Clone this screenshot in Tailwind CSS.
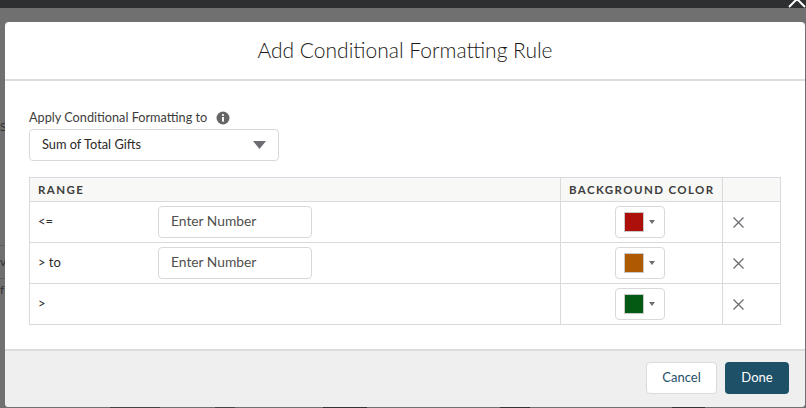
<!DOCTYPE html>
<html lang="en">
<head>
<meta charset="UTF-8" />
<title>Add Conditional Formatting Rule</title>
<script src="https://cdn.jsdelivr.net/npm/@tailwindcss/browser@4"></script>
</head>
<body class="relative h-[408px] w-[806px] overflow-hidden bg-[#707070] font-['Lato','Open_Sans',sans-serif]">
	<!-- page behind the overlay -->
	<div class="h-2 bg-[#2e2f31]"></div>
	<svg class="absolute left-[788px] top-0" width="18" height="8" viewBox="0 0 18 8" fill="none" stroke="#fff" stroke-width="2"><path d="M1 7L9 -1L17 7" /></svg>
	<div class="absolute left-0 top-[120px] text-[12px] leading-[14px] text-[#333]">Sa</div>
	<div class="absolute left-0 top-[245px] h-[34px] w-[5px] border-y border-[#606060]"></div>
	<div class="absolute left-0 top-[255px] text-[12px] leading-[14px] text-[#333]">v</div>
	<div class="absolute left-0 top-[283px] text-[12px] leading-[14px] text-[#333]">f</div>
	<div class="absolute bottom-0 left-[110px] h-px w-[50px] bg-[#444]"></div>
	<div class="absolute bottom-0 left-[215px] h-px w-[20px] bg-[#444]"></div>
	<div class="absolute bottom-0 left-[323px] h-px w-[44px] bg-[#333]"></div>
	<div class="absolute bottom-0 left-[500px] h-px w-[30px] bg-[#333]"></div>
	<div class="absolute bottom-0 left-[672px] h-px w-[33px] bg-[#333]"></div>

	<!-- modal -->
	<div class="relative ml-[5px] mt-[14px] flex h-[385px] w-[800px] flex-col overflow-hidden rounded-[4px] bg-white">
		<header class="flex h-[59px] shrink-0 items-center justify-center border-b-2 border-[#dddbda] pb-px">
			<h2 class="text-[21px] font-light leading-[26px] text-[#1c1a18]">Add Conditional Formatting Rule</h2>
		</header>

		<main class="flex-1 px-6 pt-[28px]">
			<div class="flex h-[18px] items-center gap-[9px] text-[12.7px] text-[#3e3e3c]">
				<span>Apply Conditional Formatting to</span>
				<svg class="h-[14px] w-[14px]" viewBox="0 0 14 14"><circle cx="7" cy="7" r="6.5" fill="#666" /><rect x="6" y="6" width="2" height="4.6" fill="#fff" /><circle cx="7" cy="4" r="1.1" fill="#fff" /></svg>
			</div>
			<div class="mt-[2px] flex h-8 w-[250px] items-center justify-between rounded-[4px] border border-[#d8d8d8] pl-3 pr-[12px] text-[12.8px] text-[#2b2826]">
				<span>Sum of Total Gifts</span>
				<svg width="13" height="8" viewBox="0 0 13 8"><path d="M0 0H13L6.5 8Z" fill="#6b6d70" /></svg>
			</div>

			<table class="mt-4 w-[752px] table-fixed border-collapse border border-[#d8dade] text-[13px] text-[#2b2826]">
				<thead>
					<tr class="h-6 bg-[#f8f8f7] text-left text-[11.5px] font-bold tracking-[1.4px] text-[#3e3e3c]">
						<th class="w-[531px] border border-[#d8dade] pl-2 font-bold">RANGE</th>
						<th class="w-[162px] border border-[#d8dade] pl-2 font-bold">BACKGROUND COLOR</th>
						<th class="border border-[#d8dade]"></th>
					</tr>
				</thead>
				<tbody>
					<tr class="h-[41px]">
						<td class="border border-[#d8dade] pl-2">
							<div class="flex items-center">
								<span class="w-[120px]">&lt;=</span>
								<div class="flex h-8 w-[154px] items-center rounded-[4px] border border-[#d8d8d8] pb-0.5 pl-3 text-[13.8px] text-[#514f4d]">Enter Number</div>
							</div>
						</td>
						<td class="border border-[#d8dade]">
							<div class="ml-[54px] flex h-8 w-[50px] items-center gap-[5px] rounded-[4px] border border-[#d8d8d8] pl-2">
								<span class="h-5 w-5 border border-[#c9c9c9] bg-[#ad0f0a]"></span>
								<svg width="6" height="4" viewBox="0 0 6 4"><path d="M0 0H6L3 4Z" fill="#706e6b" /></svg>
							</div>
						</td>
						<td class="border border-[#d8dade] pl-[10px]">
							<svg class="block" width="11" height="11" viewBox="0 0 11 11" fill="none" stroke="#6b6d70" stroke-width="1.3"><path d="M0.5 0.5L10.5 10.5M10.5 0.5L0.5 10.5" /></svg>
						</td>
					</tr>
					<tr class="h-[41px]">
						<td class="border border-[#d8dade] pl-2">
							<div class="flex items-center">
								<span class="w-[120px]">&gt; to</span>
								<div class="flex h-8 w-[154px] items-center rounded-[4px] border border-[#d8d8d8] pb-0.5 pl-3 text-[13.8px] text-[#514f4d]">Enter Number</div>
							</div>
						</td>
						<td class="border border-[#d8dade]">
							<div class="ml-[54px] flex h-8 w-[50px] items-center gap-[5px] rounded-[4px] border border-[#d8d8d8] pl-2">
								<span class="h-5 w-5 border border-[#c9c9c9] bg-[#ad5a00]"></span>
								<svg width="6" height="4" viewBox="0 0 6 4"><path d="M0 0H6L3 4Z" fill="#706e6b" /></svg>
							</div>
						</td>
						<td class="border border-[#d8dade] pl-[10px]">
							<svg class="block" width="11" height="11" viewBox="0 0 11 11" fill="none" stroke="#6b6d70" stroke-width="1.3"><path d="M0.5 0.5L10.5 10.5M10.5 0.5L0.5 10.5" /></svg>
						</td>
					</tr>
					<tr class="h-[41px]">
						<td class="border border-[#d8dade] pl-2">&gt;</td>
						<td class="border border-[#d8dade]">
							<div class="ml-[54px] flex h-8 w-[50px] items-center gap-[5px] rounded-[4px] border border-[#d8d8d8] pl-2">
								<span class="h-5 w-5 border border-[#c9c9c9] bg-[#045a13]"></span>
								<svg width="6" height="4" viewBox="0 0 6 4"><path d="M0 0H6L3 4Z" fill="#706e6b" /></svg>
							</div>
						</td>
						<td class="border border-[#d8dade] pl-[10px]">
							<svg class="block" width="11" height="11" viewBox="0 0 11 11" fill="none" stroke="#6b6d70" stroke-width="1.3"><path d="M0.5 0.5L10.5 10.5M10.5 0.5L0.5 10.5" /></svg>
						</td>
					</tr>
				</tbody>
			</table>
		</main>

		<footer class="flex h-[58px] shrink-0 items-start justify-end gap-2 border-t-2 border-[#dddbda] bg-[#efefef] pr-4 pt-[11px] text-[13px]">
			<button class="h-8 w-[71px] rounded-[4px] border border-[#dddbda] bg-white text-[#1f5068]">Cancel</button>
			<button class="h-8 w-16 rounded-[4px] bg-[#1e5068] text-white">Done</button>
		</footer>
	</div>
</body>
</html>
